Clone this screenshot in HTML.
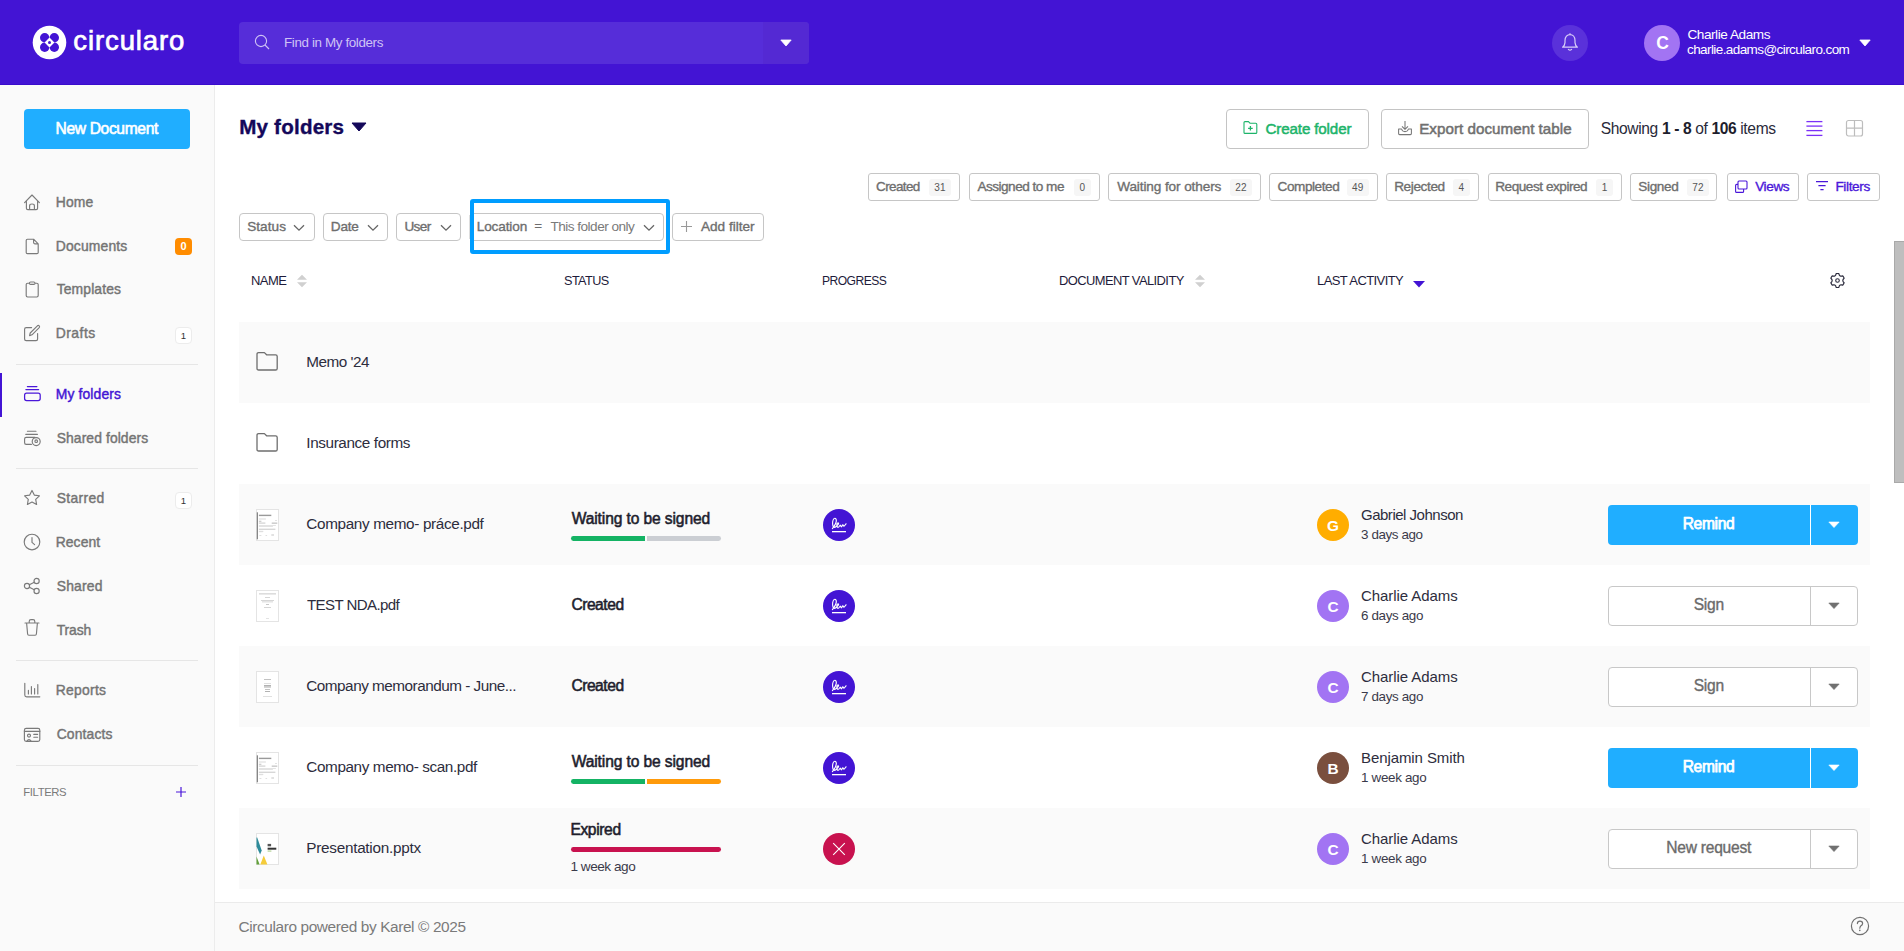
<!DOCTYPE html>
<html><head><meta charset="utf-8"><title>Circularo - My folders</title>
<style>
html,body{margin:0;padding:0;}
body{width:1904px;height:951px;position:relative;overflow:hidden;background:#fff;font-family:'Liberation Sans', sans-serif;}
.t{position:absolute;white-space:nowrap;line-height:1;font-family:'Liberation Sans', sans-serif;}
.t b{font-weight:700;color:#1e1e2d}
</style></head><body>
<div style="position:absolute;left:0px;top:0px;width:1904px;height:85px;background:#4314d4"></div>
<div style="position:absolute;left:0px;top:84px;width:1904px;height:1px;background:#3a0ccc"></div>
<svg style="position:absolute;left:32px;top:25px;" width="35" height="35" viewBox="0 0 35 35"><circle cx="17.5" cy="17.5" r="16.8" fill="#fff"/><g fill="#4314d4"><circle cx="12.7" cy="12.7" r="4.7"/><circle cx="22.3" cy="12.7" r="4.7"/><circle cx="12.7" cy="22.3" r="4.7"/><circle cx="22.3" cy="22.3" r="4.7"/></g><path d="M17.5 12.6 L22.4 17.5 L17.5 22.4 L12.6 17.5 Z" fill="#fff"/><circle cx="17.5" cy="17.5" r="1.5" fill="#4314d4"/></svg>
<div style="position:absolute;left:239px;top:22px;width:570px;height:42px;background:#562dd9;border-radius:4px"></div>
<div style="position:absolute;left:763px;top:22px;width:46px;height:42px;background:#5429d3;border-radius:0 4px 4px 0"></div>
<svg style="position:absolute;left:253px;top:33px;" width="18" height="18" viewBox="0 0 18 18"><circle cx="8" cy="8" r="5.6" fill="none" stroke="#cfc3f5" stroke-width="1.1"/><line x1="12" y1="12" x2="16" y2="16" stroke="#cfc3f5" stroke-width="1.1"/></svg>
<svg style="position:absolute;left:780px;top:38.5px;" width="12" height="8" viewBox="0 0 12 8"><path d="M0.8 1 L11.2 1 L6 7 Z" fill="#fff" stroke="#fff" stroke-width="0.8" stroke-linejoin="round"/></svg>
<div style="position:absolute;left:1552px;top:25px;width:36px;height:36px;background:#5a31da;border-radius:50%"></div>
<svg style="position:absolute;left:1561px;top:32px;" width="18" height="20" viewBox="0 0 18 20"><path d="M1.6 15.2 Q3.8 13.4 4 10.6 V8.4 C4 5 6.2 2.6 9 2.6 C11.8 2.6 14 5 14 8.4 V10.6 Q14.2 13.4 16.4 15.2 Z M9 1.2 V2.6" fill="none" stroke="#d8cdf8" stroke-width="1.2" stroke-linejoin="round"/><path d="M7.4 17.4 Q9 18.8 10.6 17.4" fill="none" stroke="#d8cdf8" stroke-width="1.2" stroke-linecap="round"/></svg>
<div style="position:absolute;left:1644px;top:25px;width:36px;height:36px;background:#a274f3;border-radius:50%"></div>
<div class="t" style="left:1644.5px;top:35px;width:36px;text-align:center;font-size:17.5px;font-weight:700;color:#fff">C</div>
<svg style="position:absolute;left:1859px;top:38.5px;" width="12" height="8" viewBox="0 0 12 8"><path d="M0.8 1 L11.2 1 L6 7 Z" fill="#fff" stroke="#fff" stroke-width="0.8" stroke-linejoin="round"/></svg>
<div style="position:absolute;left:0px;top:85px;width:214px;height:866px;background:#fafafa"></div>
<div style="position:absolute;left:214px;top:85px;width:1px;height:866px;background:#ececec"></div>
<div style="position:absolute;left:24px;top:109px;width:166px;height:40px;background:#20aeff;border-radius:4px"></div>
<div style="position:absolute;left:16px;top:364px;width:182px;height:1px;background:#e6e6e6"></div>
<div style="position:absolute;left:16px;top:468px;width:182px;height:1px;background:#e6e6e6"></div>
<div style="position:absolute;left:16px;top:660px;width:182px;height:1px;background:#e6e6e6"></div>
<div style="position:absolute;left:16px;top:765px;width:182px;height:1px;background:#e6e6e6"></div>
<div style="position:absolute;left:0px;top:373px;width:2px;height:44px;background:#4314d4"></div>
<div style="position:absolute;left:175px;top:238px;width:17px;height:17px;background:#ff8c00;border-radius:4px"></div>
<div class="t" style="left:175px;top:240.5px;width:17px;text-align:center;font-size:11px;font-weight:700;color:#fff">0</div>
<div style="position:absolute;left:175px;top:326.5px;width:15px;height:15px;background:#fff;border:1px solid #ececec;border-radius:4px"></div>
<div class="t" style="left:175px;top:330.5px;width:17px;text-align:center;font-size:9.6px;font-weight:400;color:#333">1</div>
<div style="position:absolute;left:175px;top:491.5px;width:15px;height:15px;background:#fff;border:1px solid #ececec;border-radius:4px"></div>
<div class="t" style="left:175px;top:495.5px;width:17px;text-align:center;font-size:9.6px;font-weight:400;color:#333">1</div>
<svg style="position:absolute;left:175px;top:786px;" width="12" height="12" viewBox="0 0 12 12"><path d="M6 1 V11 M1 6 H11" stroke="#4a17d9" stroke-width="1.2"/></svg>
<svg style="position:absolute;left:23px;top:193px;" width="19" height="19" viewBox="0 0 19 19"><path d="M1.6 9.6 L9 2 L16.4 9.6 M3.4 8 V15.2 Q3.4 16.6 4.8 16.6 H13.2 Q14.6 16.6 14.6 15.2 V8 M6.6 16.6 V12.8 Q6.6 11 9 11 Q11.4 11 11.4 12.8 V16.6" fill="none" stroke="#7a7a7a" stroke-width="1.15" stroke-linejoin="round" stroke-linecap="round"/></svg>
<svg style="position:absolute;left:25px;top:238px;" width="19" height="19" viewBox="0 0 19 19"><path d="M2.4 1.2 H8.6 L13.2 5.8 V14.4 Q13.2 15.6 12 15.6 H2.4 Q1.2 15.6 1.2 14.4 V2.4 Q1.2 1.2 2.4 1.2 Z M8.6 1.2 V4.6 Q8.6 5.8 9.8 5.8 H13.2" fill="none" stroke="#7a7a7a" stroke-width="1.15" stroke-linejoin="round" stroke-linecap="round"/></svg>
<svg style="position:absolute;left:25px;top:281px;" width="19" height="19" viewBox="0 0 19 19"><path d="M4.4 2.2 H2.6 Q1.2 2.2 1.2 3.6 V14.6 Q1.2 16 2.6 16 H11.8 Q13.2 16 13.2 14.6 V3.6 Q13.2 2.2 11.8 2.2 H10 M4.4 2.2 Q4.4 1 5.6 1 H8.8 Q10 1 10 2.2 Q10 3.4 8.8 3.4 H5.6 Q4.4 3.4 4.4 2.2" fill="none" stroke="#7a7a7a" stroke-width="1.15" stroke-linejoin="round" stroke-linecap="round"/></svg>
<svg style="position:absolute;left:23px;top:324px;" width="19" height="19" viewBox="0 0 19 19"><path d="M8.6 3.6 H3.2 Q1.6 3.6 1.6 5.2 V15 Q1.6 16.6 3.2 16.6 H13 Q14.6 16.6 14.6 15 V9.6 M6.6 11.6 L7.2 9 L14.4 1.8 Q15.4 1 16.2 1.8 Q17 2.6 16.2 3.6 L9 10.8 Z" fill="none" stroke="#7a7a7a" stroke-width="1.15" stroke-linejoin="round" stroke-linecap="round"/></svg>
<svg style="position:absolute;left:23px;top:429px;" width="19" height="19" viewBox="0 0 19 19"><path d="M4.4 2.2 H13 M2.8 5.4 H14.4 M12 8.4 H3.2 Q1.6 8.4 1.6 10 V13.8 Q1.6 15.4 3.2 15.4 H8.4" fill="none" stroke="#7a7a7a" stroke-width="1.15" stroke-linejoin="round" stroke-linecap="round"/><circle cx="13.2" cy="12.6" r="4" fill="none" stroke="#7a7a7a" stroke-width="1.15" stroke-linejoin="round" stroke-linecap="round"/><circle cx="13.2" cy="12.2" r="1.3" fill="none" stroke="#7a7a7a" stroke-width="1.15" stroke-linejoin="round" stroke-linecap="round"/></svg>
<svg style="position:absolute;left:23px;top:489px;" width="19" height="19" viewBox="0 0 19 19"><path d="M9 1.4 L11.3 6.1 L16.4 6.8 L12.7 10.4 L13.6 15.5 L9 13.1 L4.4 15.5 L5.3 10.4 L1.6 6.8 L6.7 6.1 Z" fill="none" stroke="#7a7a7a" stroke-width="1.15" stroke-linejoin="round" stroke-linecap="round"/></svg>
<svg style="position:absolute;left:23px;top:533px;" width="19" height="19" viewBox="0 0 19 19"><circle cx="9" cy="9" r="7.8" fill="none" stroke="#7a7a7a" stroke-width="1.15" stroke-linejoin="round" stroke-linecap="round"/><path d="M9 4.6 V9.4 L11.6 11.6" fill="none" stroke="#7a7a7a" stroke-width="1.15" stroke-linejoin="round" stroke-linecap="round"/></svg>
<svg style="position:absolute;left:23px;top:577px;" width="19" height="19" viewBox="0 0 19 19"><circle cx="4" cy="9" r="2.6" fill="none" stroke="#7a7a7a" stroke-width="1.15" stroke-linejoin="round" stroke-linecap="round"/><circle cx="13.6" cy="4" r="2.6" fill="none" stroke="#7a7a7a" stroke-width="1.15" stroke-linejoin="round" stroke-linecap="round"/><circle cx="13.6" cy="14" r="2.6" fill="none" stroke="#7a7a7a" stroke-width="1.15" stroke-linejoin="round" stroke-linecap="round"/><path d="M6.3 7.8 L11.3 5.2 M6.3 10.2 L11.3 12.8" fill="none" stroke="#7a7a7a" stroke-width="1.15" stroke-linejoin="round" stroke-linecap="round"/></svg>
<svg style="position:absolute;left:23px;top:618px;" width="19" height="19" viewBox="0 0 19 19"><path d="M2 5 H16 M6.2 5 V3.4 Q6.2 1.6 8 1.6 H10 Q11.8 1.6 11.8 3.4 V5 M3.6 5 L4.6 16 Q4.7 17.2 5.9 17.2 H12.1 Q13.3 17.2 13.4 16 L14.4 5" fill="none" stroke="#7a7a7a" stroke-width="1.15" stroke-linejoin="round" stroke-linecap="round"/></svg>
<svg style="position:absolute;left:23px;top:682px;" width="19" height="19" viewBox="0 0 19 19"><path d="M1.8 1.2 V13 Q1.8 14.8 3.6 14.8 H16.8 M5.4 8.4 V12 M8.4 4.6 V12 M11.6 6.6 V12 M14.8 2.6 V12" fill="none" stroke="#7a7a7a" stroke-width="1.15" stroke-linejoin="round" stroke-linecap="round"/></svg>
<svg style="position:absolute;left:23px;top:727px;" width="19" height="19" viewBox="0 0 19 19"><rect x="1.4" y="1.4" width="15.4" height="13" rx="1.8" fill="none" stroke="#7a7a7a" stroke-width="1.15" stroke-linejoin="round" stroke-linecap="round"/><path d="M1.4 4.4 H16.8 M10.8 7.4 H14.6 M10.8 10.2 H14.6 M3.8 14.4 Q6 10.8 8.2 14.4" fill="none" stroke="#7a7a7a" stroke-width="1.15" stroke-linejoin="round" stroke-linecap="round"/><circle cx="6" cy="8.6" r="1.5" fill="none" stroke="#7a7a7a" stroke-width="1.15" stroke-linejoin="round" stroke-linecap="round"/></svg>
<svg style="position:absolute;left:23px;top:384px;" width="19" height="19" viewBox="0 0 19 19"><path d="M4.4 2.5 H13.9 M2.9 5.6 H15.6" fill="none" stroke="#4a17d9" stroke-width="1.25" stroke-linecap="round"/><rect x="1.6" y="9.2" width="15.6" height="7.4" rx="2" fill="none" stroke="#4a17d9" stroke-width="1.25" stroke-linecap="round"/></svg>
<svg style="position:absolute;left:351px;top:122px;" width="16" height="10" viewBox="0 0 16 10"><path d="M1 1 H15 L8 9 Z" fill="#14085a" stroke="#14085a" stroke-linejoin="round" stroke-width="1"/></svg>
<div style="position:absolute;left:1226px;top:109px;width:141px;height:38px;border:1px solid #c4c4c4;border-radius:4px"></div>
<svg style="position:absolute;left:1242px;top:120px;" width="17" height="15" viewBox="0 0 17 15"><path d="M2 2.6 Q2 1.6 3 1.6 H6.4 L8 3.2 H13.8 Q14.8 3.2 14.8 4.2 V12.4 Q14.8 13.4 13.8 13.4 H3 Q2 13.4 2 12.4 Z" fill="none" stroke="#1db46a" stroke-width="1.1"/><path d="M8.4 6 V10.6 M6.1 8.3 H10.7" stroke="#1db46a" stroke-width="1.3"/></svg>
<div style="position:absolute;left:1381px;top:109px;width:206px;height:38px;border:1px solid #c4c4c4;border-radius:4px"></div>
<svg style="position:absolute;left:1397px;top:120px;" width="16" height="16" viewBox="0 0 16 16"><path d="M8 1 V9 M5 6.3 L8 9.3 L11 6.3 M1.6 9 V13.6 Q1.6 14.6 2.6 14.6 H13.4 Q14.4 14.6 14.4 13.6 V9 H11.4 Q10.8 11.6 8 11.6 Q5.2 11.6 4.6 9 Z" fill="none" stroke="#777" stroke-width="1.05" stroke-linejoin="round"/></svg>
<svg style="position:absolute;left:1805px;top:120px;" width="19" height="18" viewBox="0 0 19 18"><line x1="1.4" y1="1.6" x2="17.4" y2="1.6" stroke="#7b2ff7" stroke-width="1.3"/><line x1="1.4" y1="6.1" x2="17.4" y2="6.1" stroke="#7b2ff7" stroke-width="1.3"/><line x1="1.4" y1="10.6" x2="17.4" y2="10.6" stroke="#7b2ff7" stroke-width="1.3"/><line x1="1.4" y1="15.4" x2="17.4" y2="15.4" stroke="#7b2ff7" stroke-width="1.3"/></svg>
<svg style="position:absolute;left:1845px;top:119px;" width="19" height="19" viewBox="0 0 19 19"><rect x="1.5" y="1.5" width="16" height="15.5" rx="2" fill="none" stroke="#bdbdbd" stroke-width="1.2"/><path d="M9.5 1.5 V17 M1.5 9.2 H17.5" stroke="#bdbdbd" stroke-width="1.2"/></svg>
<div style="position:absolute;left:867.5px;top:173px;width:90.20000000000005px;height:26px;border:1px solid #c6c6c6;border-radius:3px"></div>
<div style="position:absolute;left:929px;top:179px;width:21.799999999999955px;height:17px;background:#f6f6f6;border-radius:3px"></div>
<div class="t" style="left:929px;top:182.5px;width:21.799999999999955px;text-align:center;font-size:10px;color:#555;font-weight:400;letter-spacing:0.2px">31</div>
<div style="position:absolute;left:968.6px;top:173px;width:129.10000000000002px;height:26px;border:1px solid #c6c6c6;border-radius:3px"></div>
<div style="position:absolute;left:1074px;top:179px;width:16.799999999999955px;height:17px;background:#f6f6f6;border-radius:3px"></div>
<div class="t" style="left:1074px;top:182.5px;width:16.799999999999955px;text-align:center;font-size:10px;color:#555;font-weight:400;letter-spacing:0.2px">0</div>
<div style="position:absolute;left:1108.4px;top:173px;width:150.29999999999995px;height:26px;border:1px solid #c6c6c6;border-radius:3px"></div>
<div style="position:absolute;left:1230.3px;top:179px;width:21.40000000000009px;height:17px;background:#f6f6f6;border-radius:3px"></div>
<div class="t" style="left:1230.3px;top:182.5px;width:21.40000000000009px;text-align:center;font-size:10px;color:#555;font-weight:400;letter-spacing:0.2px">22</div>
<div style="position:absolute;left:1269.3px;top:173px;width:106.40000000000009px;height:26px;border:1px solid #c6c6c6;border-radius:3px"></div>
<div style="position:absolute;left:1346.8px;top:179px;width:22.100000000000136px;height:17px;background:#f6f6f6;border-radius:3px"></div>
<div class="t" style="left:1346.8px;top:182.5px;width:22.100000000000136px;text-align:center;font-size:10px;color:#555;font-weight:400;letter-spacing:0.2px">49</div>
<div style="position:absolute;left:1386.1px;top:173px;width:90.5px;height:26px;border:1px solid #c6c6c6;border-radius:3px"></div>
<div style="position:absolute;left:1453px;top:179px;width:16.700000000000045px;height:17px;background:#f6f6f6;border-radius:3px"></div>
<div class="t" style="left:1453px;top:182.5px;width:16.700000000000045px;text-align:center;font-size:10px;color:#555;font-weight:400;letter-spacing:0.2px">4</div>
<div style="position:absolute;left:1487.5px;top:173px;width:132.20000000000005px;height:26px;border:1px solid #c6c6c6;border-radius:3px"></div>
<div style="position:absolute;left:1596.3px;top:179px;width:16.700000000000045px;height:17px;background:#f6f6f6;border-radius:3px"></div>
<div class="t" style="left:1596.3px;top:182.5px;width:16.700000000000045px;text-align:center;font-size:10px;color:#555;font-weight:400;letter-spacing:0.2px">1</div>
<div style="position:absolute;left:1630.3px;top:173px;width:85.20000000000005px;height:26px;border:1px solid #c6c6c6;border-radius:3px"></div>
<div style="position:absolute;left:1687.1px;top:179px;width:21.600000000000136px;height:17px;background:#f6f6f6;border-radius:3px"></div>
<div class="t" style="left:1687.1px;top:182.5px;width:21.600000000000136px;text-align:center;font-size:10px;color:#555;font-weight:400;letter-spacing:0.2px">72</div>
<div style="position:absolute;left:1726.6px;top:173px;width:70px;height:26px;border:1px solid #c6c6c6;border-radius:3px"></div>
<div style="position:absolute;left:1807.3px;top:173px;width:70.5px;height:26px;border:1px solid #c6c6c6;border-radius:3px"></div>
<svg style="position:absolute;left:1734px;top:179px;" width="15" height="15" viewBox="0 0 15 15"><path d="M5 2 H12 Q13 2 13 3 V9 Q13 10 12 10 H5 Q4 10 4 9 V3 Q4 2 5 2 Z" fill="none" stroke="#4a17d9" stroke-width="1.1"/><path d="M4 5.4 H2.6 Q1.6 5.4 1.6 6.4 V12.4 Q1.6 13.4 2.6 13.4 H8.6 Q9.6 13.4 9.6 12.4 V10" fill="none" stroke="#4a17d9" stroke-width="1.1"/></svg>
<svg style="position:absolute;left:1815px;top:179px;" width="14" height="15" viewBox="0 0 14 15"><path d="M1 2.6 H13 M3.4 6.6 H10.6 M5.4 10.6 H8.6" stroke="#4a17d9" stroke-width="1.1"/></svg>
<div style="position:absolute;left:239.4px;top:213px;width:73.29999999999998px;height:26px;border:1px solid #c6c6c6;border-radius:4px;background:#fff"></div>
<svg style="position:absolute;left:293.2px;top:223.5px;" width="12" height="8" viewBox="0 0 12 8"><path d="M1 1.2 L6 6.2 L11 1.2" fill="none" stroke="#666" stroke-width="1.3"/></svg>
<div style="position:absolute;left:323.2px;top:213px;width:62.60000000000002px;height:26px;border:1px solid #c6c6c6;border-radius:4px;background:#fff"></div>
<svg style="position:absolute;left:367.2px;top:223.5px;" width="12" height="8" viewBox="0 0 12 8"><path d="M1 1.2 L6 6.2 L11 1.2" fill="none" stroke="#666" stroke-width="1.3"/></svg>
<div style="position:absolute;left:396.3px;top:213px;width:62.30000000000001px;height:26px;border:1px solid #c6c6c6;border-radius:4px;background:#fff"></div>
<svg style="position:absolute;left:440.2px;top:223.5px;" width="12" height="8" viewBox="0 0 12 8"><path d="M1 1.2 L6 6.2 L11 1.2" fill="none" stroke="#666" stroke-width="1.3"/></svg>
<div style="position:absolute;left:469.6px;top:213px;width:192.0px;height:26px;border:1px solid #c6c6c6;border-radius:4px;background:#fff"></div>
<svg style="position:absolute;left:643.2px;top:223.5px;" width="12" height="8" viewBox="0 0 12 8"><path d="M1 1.2 L6 6.2 L11 1.2" fill="none" stroke="#666" stroke-width="1.3"/></svg>
<div style="position:absolute;left:672.1px;top:213px;width:89.7px;height:26px;border:1px solid #c6c6c6;border-radius:4px"></div>
<svg style="position:absolute;left:680px;top:220px;" width="13" height="13" viewBox="0 0 13 13"><path d="M6.5 1 V12 M1 6.5 H12" stroke="#999" stroke-width="1.1"/></svg>
<div style="position:absolute;left:469px;top:215px;width:1px;height:24px;background:#dedede"></div>
<div style="position:absolute;left:470.2px;top:199px;width:199.6px;height:54.5px;border:4px solid #009dff;border-radius:3px;box-sizing:border-box"></div>
<svg style="position:absolute;left:296px;top:274px;" width="12" height="15" viewBox="0 0 12 15"><path d="M6 0.8 L11 5.8 H1 Z M1 8.2 H11 L6 13.2 Z" fill="#d0d0d0"/></svg>
<svg style="position:absolute;left:1194px;top:274px;" width="12" height="15" viewBox="0 0 12 15"><path d="M6 0.8 L11 5.8 H1 Z M1 8.2 H11 L6 13.2 Z" fill="#d0d0d0"/></svg>
<svg style="position:absolute;left:1412px;top:280px;" width="14" height="9" viewBox="0 0 14 9"><path d="M1 1 H13 L7 7.4 Z" fill="#4314d4"/></svg>
<svg style="position:absolute;left:1828px;top:271px;" width="19" height="19" viewBox="0 0 19 19"><path d="M8.16 2.63 A7.0 7.0 0 0 1 10.84 2.63 Q11.50 6.04 14.78 4.91 A7.0 7.0 0 0 1 16.12 7.22 Q13.50 9.50 16.12 11.78 A7.0 7.0 0 0 1 14.78 14.09 Q11.50 12.96 10.84 16.37 A7.0 7.0 0 0 1 8.16 16.37 Q7.50 12.96 4.22 14.09 A7.0 7.0 0 0 1 2.88 11.78 Q5.50 9.50 2.88 7.22 A7.0 7.0 0 0 1 4.22 4.91 Q7.50 6.04 8.16 2.63 Z" fill="none" stroke="#2a2a3c" stroke-width="1.15" stroke-linejoin="round"/><circle cx="9.5" cy="9.5" r="1.8" fill="none" stroke="#2a2a3c" stroke-width="1.1"/></svg>
<div style="position:absolute;left:239px;top:322px;width:1631px;height:81px;background:#fafafa"></div>
<div style="position:absolute;left:239px;top:484px;width:1631px;height:81px;background:#fafafa"></div>
<div style="position:absolute;left:239px;top:646px;width:1631px;height:81px;background:#fafafa"></div>
<div style="position:absolute;left:239px;top:808px;width:1631px;height:81px;background:#fafafa"></div>
<svg style="position:absolute;left:255px;top:351px;" width="25" height="21" viewBox="0 0 25 21"><path d="M2 3.2 Q2 1.6 3.6 1.6 H9.4 L11.6 3.8 H20.6 Q22.2 3.8 22.2 5.4 V17.4 Q22.2 19 20.6 19 H3.6 Q2 19 2 17.4 Z" fill="none" stroke="#6e6e6e" stroke-width="1.3" stroke-linejoin="round"/></svg>
<svg style="position:absolute;left:255px;top:432px;" width="25" height="21" viewBox="0 0 25 21"><path d="M2 3.2 Q2 1.6 3.6 1.6 H9.4 L11.6 3.8 H20.6 Q22.2 3.8 22.2 5.4 V17.4 Q22.2 19 20.6 19 H3.6 Q2 19 2 17.4 Z" fill="none" stroke="#6e6e6e" stroke-width="1.3" stroke-linejoin="round"/></svg>
<svg style="position:absolute;left:255.5px;top:508.5px;" width="23" height="32" viewBox="0 0 23 32"><rect x="0.5" y="0.5" width="22" height="31" fill="#fff" stroke="#e4e4e4"/><rect x="0.8" y="3.3" width="1.1" height="27" fill="#7a7a7a"/><rect x="2.9" y="5.7" width="12.4" height="1.4" fill="#9a9a9a"/><rect x="2.9" y="9.2" width="7" height="0.6" fill="#e0e0e0"/><rect x="2.9" y="10.4" width="7" height="0.6" fill="#e0e0e0"/><rect x="2.9" y="11.8" width="2.5" height="0.8" fill="#b0b0b0"/><rect x="19" y="11.3" width="2" height="0.6" fill="#d0d0d0"/><rect x="2.9" y="13.7" width="6.5" height="0.7" fill="#b0b0b0"/><rect x="15.7" y="13.7" width="5.6" height="0.8" fill="#a0a0a0"/><rect x="2.9" y="16.2" width="17" height="0.6" fill="#d0d0d0"/><rect x="2.9" y="17.2" width="14" height="0.6" fill="#d0d0d0"/><rect x="2.9" y="19.8" width="16.5" height="0.7" fill="#b0b0b0"/><rect x="2.9" y="21.9" width="4.4" height="0.6" fill="#c0c0c0"/><rect x="2.9" y="22.7" width="4" height="0.5" fill="#e0e0e0"/><rect x="3.4" y="26.4" width="2" height="0.5" fill="#c0c0c0"/><rect x="9.5" y="26.4" width="1.6" height="0.5" fill="#c0c0c0"/><rect x="15.3" y="25.7" width="2.7" height="0.6" fill="#a0a0a0"/></svg>
<svg style="position:absolute;left:255.5px;top:589.5px;" width="23" height="32" viewBox="0 0 23 32"><rect x="0.5" y="0.5" width="22" height="31" fill="#fff" stroke="#e4e4e4"/><rect x="3" y="3" width="17" height="1.6" fill="#ddd"/><rect x="9" y="7" width="5" height="0.8" fill="#ccc"/><rect x="5" y="10" width="13" height="0.8" fill="#ccc"/><rect x="6" y="11.5" width="11" height="0.8" fill="#ccc"/><rect x="10" y="14" width="3" height="0.8" fill="#bbb"/><rect x="8" y="17" width="7" height="0.8" fill="#ccc"/><rect x="10" y="28" width="3" height="0.8" fill="#ddd"/></svg>
<svg style="position:absolute;left:255.5px;top:670.5px;" width="23" height="32" viewBox="0 0 23 32"><rect x="0.5" y="0.5" width="22" height="31" fill="#fff" stroke="#e4e4e4"/><rect x="8" y="8" width="7" height="0.9" fill="#bbb"/><rect x="8" y="12" width="7" height="0.9" fill="#ddd"/><rect x="8" y="14" width="7" height="0.9" fill="#aaa"/><rect x="8" y="15.5" width="7" height="0.9" fill="#999"/><rect x="9" y="18" width="5" height="0.9" fill="#bbb"/><rect x="9" y="20" width="5" height="0.9" fill="#aaa"/><rect x="7" y="25" width="9" height="0.9" fill="#ddd"/></svg>
<svg style="position:absolute;left:255.5px;top:751.5px;" width="23" height="32" viewBox="0 0 23 32"><rect x="0.5" y="0.5" width="22" height="31" fill="#fff" stroke="#e4e4e4"/><rect x="0.8" y="3.3" width="1.1" height="27" fill="#7a7a7a"/><rect x="2.9" y="5.7" width="12.4" height="1.4" fill="#9a9a9a"/><rect x="2.9" y="9.2" width="7" height="0.6" fill="#e0e0e0"/><rect x="2.9" y="10.4" width="7" height="0.6" fill="#e0e0e0"/><rect x="2.9" y="11.8" width="2.5" height="0.8" fill="#b0b0b0"/><rect x="19" y="11.3" width="2" height="0.6" fill="#d0d0d0"/><rect x="2.9" y="13.7" width="6.5" height="0.7" fill="#b0b0b0"/><rect x="15.7" y="13.7" width="5.6" height="0.8" fill="#a0a0a0"/><rect x="2.9" y="16.2" width="17" height="0.6" fill="#d0d0d0"/><rect x="2.9" y="17.2" width="14" height="0.6" fill="#d0d0d0"/><rect x="2.9" y="19.8" width="16.5" height="0.7" fill="#b0b0b0"/><rect x="2.9" y="21.9" width="4.4" height="0.6" fill="#c0c0c0"/><rect x="2.9" y="22.7" width="4" height="0.5" fill="#e0e0e0"/><rect x="3.4" y="26.4" width="2" height="0.5" fill="#c0c0c0"/><rect x="9.5" y="26.4" width="1.6" height="0.5" fill="#c0c0c0"/><rect x="15.3" y="25.7" width="2.7" height="0.6" fill="#a0a0a0"/></svg>
<svg style="position:absolute;left:255.5px;top:832.5px;" width="23" height="32" viewBox="0 0 23 32"><rect x="0.5" y="0.5" width="22" height="31" fill="#fff" stroke="#e4e4e4"/><path d="M0.5 4.5 L1.2 4.5 L5.7 17.5 L4.1 21.5 L0.5 13.5 Z" fill="#2e8b9a"/><path d="M0.5 23.4 L3.6 31.5 L0.5 31.5 Z" fill="#62a03a"/><path d="M7.8 22.4 L11.4 31.5 L4.3 31.5 Z" fill="#f5cc3a"/><rect x="11.6" y="10.9" width="3.5" height="2.4" fill="#555"/><rect x="11.6" y="14.7" width="8.7" height="2" fill="#333"/><rect x="11.6" y="17.7" width="3.8" height="0.7" fill="#7ab04a"/></svg>
<div style="position:absolute;left:571px;top:536px;width:74px;height:4.8px;background:#14b364;border-radius:2.4px 0 0 2.4px"></div><div style="position:absolute;left:647px;top:536px;width:74px;height:4.8px;background:#cbced3;border-radius:0 2.4px 2.4px 0"></div>
<div style="position:absolute;left:571px;top:779px;width:74px;height:4.8px;background:#14b364;border-radius:2.4px 0 0 2.4px"></div><div style="position:absolute;left:647px;top:779px;width:74px;height:4.8px;background:#ff9a0a;border-radius:0 2.4px 2.4px 0"></div>
<div style="position:absolute;left:571px;top:847.2px;width:150px;height:4.8px;background:#c8124f;border-radius:2.4px"></div>
<svg style="position:absolute;left:823px;top:509px;" width="32" height="32" viewBox="0 0 32 32"><circle cx="16" cy="16" r="16" fill="#4314d4"/><path d="M9.4 19.6 C11.5 17 13.6 14 13.3 11 C13.1 9.4 12 8.8 11 9.6 C9.6 10.8 9.2 14.4 10 17 C10.4 18.4 11.6 18.8 12.8 17.8 C14 16.8 15.8 15.4 15.6 14.4 C15.4 13.6 14.2 13.8 13.9 15.2 C13.6 16.8 14.2 18.6 15.4 18.2 C16.2 17.9 16.6 16.6 17.2 16.2 C17.6 16 17.8 17.8 18.4 17.8 C19 17.8 19.2 15.8 19.8 15.8 C20.4 15.8 20.4 17.4 21 17.2 C21.6 17 22.4 15.6 23 14.8" fill="none" stroke="#fff" stroke-width="1.15" stroke-linecap="round" stroke-linejoin="round"/><rect x="9" y="22" width="14" height="1.3" fill="#fff"/></svg>
<svg style="position:absolute;left:823px;top:590px;" width="32" height="32" viewBox="0 0 32 32"><circle cx="16" cy="16" r="16" fill="#4314d4"/><path d="M9.4 19.6 C11.5 17 13.6 14 13.3 11 C13.1 9.4 12 8.8 11 9.6 C9.6 10.8 9.2 14.4 10 17 C10.4 18.4 11.6 18.8 12.8 17.8 C14 16.8 15.8 15.4 15.6 14.4 C15.4 13.6 14.2 13.8 13.9 15.2 C13.6 16.8 14.2 18.6 15.4 18.2 C16.2 17.9 16.6 16.6 17.2 16.2 C17.6 16 17.8 17.8 18.4 17.8 C19 17.8 19.2 15.8 19.8 15.8 C20.4 15.8 20.4 17.4 21 17.2 C21.6 17 22.4 15.6 23 14.8" fill="none" stroke="#fff" stroke-width="1.15" stroke-linecap="round" stroke-linejoin="round"/><rect x="9" y="22" width="14" height="1.3" fill="#fff"/></svg>
<svg style="position:absolute;left:823px;top:671px;" width="32" height="32" viewBox="0 0 32 32"><circle cx="16" cy="16" r="16" fill="#4314d4"/><path d="M9.4 19.6 C11.5 17 13.6 14 13.3 11 C13.1 9.4 12 8.8 11 9.6 C9.6 10.8 9.2 14.4 10 17 C10.4 18.4 11.6 18.8 12.8 17.8 C14 16.8 15.8 15.4 15.6 14.4 C15.4 13.6 14.2 13.8 13.9 15.2 C13.6 16.8 14.2 18.6 15.4 18.2 C16.2 17.9 16.6 16.6 17.2 16.2 C17.6 16 17.8 17.8 18.4 17.8 C19 17.8 19.2 15.8 19.8 15.8 C20.4 15.8 20.4 17.4 21 17.2 C21.6 17 22.4 15.6 23 14.8" fill="none" stroke="#fff" stroke-width="1.15" stroke-linecap="round" stroke-linejoin="round"/><rect x="9" y="22" width="14" height="1.3" fill="#fff"/></svg>
<svg style="position:absolute;left:823px;top:752px;" width="32" height="32" viewBox="0 0 32 32"><circle cx="16" cy="16" r="16" fill="#4314d4"/><path d="M9.4 19.6 C11.5 17 13.6 14 13.3 11 C13.1 9.4 12 8.8 11 9.6 C9.6 10.8 9.2 14.4 10 17 C10.4 18.4 11.6 18.8 12.8 17.8 C14 16.8 15.8 15.4 15.6 14.4 C15.4 13.6 14.2 13.8 13.9 15.2 C13.6 16.8 14.2 18.6 15.4 18.2 C16.2 17.9 16.6 16.6 17.2 16.2 C17.6 16 17.8 17.8 18.4 17.8 C19 17.8 19.2 15.8 19.8 15.8 C20.4 15.8 20.4 17.4 21 17.2 C21.6 17 22.4 15.6 23 14.8" fill="none" stroke="#fff" stroke-width="1.15" stroke-linecap="round" stroke-linejoin="round"/><rect x="9" y="22" width="14" height="1.3" fill="#fff"/></svg>
<svg style="position:absolute;left:823px;top:833px;" width="32" height="32" viewBox="0 0 32 32"><circle cx="16" cy="16" r="16" fill="#c8124f"/><path d="M10.2 10.2 L21.8 21.8 M21.8 10.2 L10.2 21.8" stroke="#fff" stroke-width="1.1"/></svg>
<div style="position:absolute;left:1317px;top:509px;width:32px;height:32px;background:#ffad00;border-radius:50%"></div>
<div class="t" style="left:1317px;top:517.6px;width:32px;text-align:center;font-size:15.4px;font-weight:700;color:#fff">G</div>
<div style="position:absolute;left:1317px;top:590px;width:32px;height:32px;background:#a274f3;border-radius:50%"></div>
<div class="t" style="left:1317px;top:598.6px;width:32px;text-align:center;font-size:15.4px;font-weight:700;color:#fff">C</div>
<div style="position:absolute;left:1317px;top:671px;width:32px;height:32px;background:#a274f3;border-radius:50%"></div>
<div class="t" style="left:1317px;top:679.6px;width:32px;text-align:center;font-size:15.4px;font-weight:700;color:#fff">C</div>
<div style="position:absolute;left:1317px;top:752px;width:32px;height:32px;background:#7a4f3e;border-radius:50%"></div>
<div class="t" style="left:1317px;top:760.6px;width:32px;text-align:center;font-size:15.4px;font-weight:700;color:#fff">B</div>
<div style="position:absolute;left:1317px;top:833px;width:32px;height:32px;background:#a274f3;border-radius:50%"></div>
<div class="t" style="left:1317px;top:841.6px;width:32px;text-align:center;font-size:15.4px;font-weight:700;color:#fff">C</div>
<div style="position:absolute;left:1608px;top:505px;width:250px;height:40px;background:#20aeff;border-radius:4px"></div>
<div style="position:absolute;left:1810px;top:505px;width:1px;height:40px;background:#fff"></div>
<svg style="position:absolute;left:1828px;top:521px;" width="12" height="8" viewBox="0 0 12 8"><path d="M0.8 1 H11.2 L6 6.6 Z" fill="#fff" stroke="#fff" stroke-width="0.6" stroke-linejoin="round"/></svg>
<div style="position:absolute;left:1608px;top:586px;width:248px;height:38px;background:#fff;border:1px solid #c8c8c8;border-radius:4px"></div>
<div style="position:absolute;left:1810px;top:586px;width:1px;height:40px;background:#c8c8c8"></div>
<svg style="position:absolute;left:1828px;top:602px;" width="12" height="8" viewBox="0 0 12 8"><path d="M0.8 1 H11.2 L6 6.6 Z" fill="#707070" stroke="#707070" stroke-width="0.6" stroke-linejoin="round"/></svg>
<div style="position:absolute;left:1608px;top:667px;width:248px;height:38px;background:#fff;border:1px solid #c8c8c8;border-radius:4px"></div>
<div style="position:absolute;left:1810px;top:667px;width:1px;height:40px;background:#c8c8c8"></div>
<svg style="position:absolute;left:1828px;top:683px;" width="12" height="8" viewBox="0 0 12 8"><path d="M0.8 1 H11.2 L6 6.6 Z" fill="#707070" stroke="#707070" stroke-width="0.6" stroke-linejoin="round"/></svg>
<div style="position:absolute;left:1608px;top:748px;width:250px;height:40px;background:#20aeff;border-radius:4px"></div>
<div style="position:absolute;left:1810px;top:748px;width:1px;height:40px;background:#fff"></div>
<svg style="position:absolute;left:1828px;top:764px;" width="12" height="8" viewBox="0 0 12 8"><path d="M0.8 1 H11.2 L6 6.6 Z" fill="#fff" stroke="#fff" stroke-width="0.6" stroke-linejoin="round"/></svg>
<div style="position:absolute;left:1608px;top:829px;width:248px;height:38px;background:#fff;border:1px solid #c8c8c8;border-radius:4px"></div>
<div style="position:absolute;left:1810px;top:829px;width:1px;height:40px;background:#c8c8c8"></div>
<svg style="position:absolute;left:1828px;top:845px;" width="12" height="8" viewBox="0 0 12 8"><path d="M0.8 1 H11.2 L6 6.6 Z" fill="#707070" stroke="#707070" stroke-width="0.6" stroke-linejoin="round"/></svg>
<div style="position:absolute;left:215px;top:902px;width:1689px;height:49px;background:#fafafa"></div>
<div style="position:absolute;left:215px;top:902px;width:1689px;height:1px;background:#ebebeb"></div>
<svg style="position:absolute;left:1850px;top:916px;" width="20" height="20" viewBox="0 0 20 20"><circle cx="10" cy="10" r="8.6" fill="none" stroke="#707070" stroke-width="1.2"/><path d="M7.4 7.6 Q7.4 5.2 10 5.2 Q12.6 5.2 12.6 7.4 Q12.6 9 10.8 9.9 Q10 10.4 9.8 12.2" fill="none" stroke="#707070" stroke-width="1.2" stroke-linecap="round"/><circle cx="9.8" cy="14.4" r="0.8" fill="#707070"/></svg>
<div style="position:absolute;left:1894px;top:241px;width:10px;height:242px;background:#bebebe;border-left:1px solid #a9a9a9;border-top:1px solid #a9a9a9;border-bottom:1px solid #a9a9a9;box-sizing:border-box"></div>
<div class="t" style="left:73.30px;top:27.00px;font-size:27.5px;font-weight:400;color:#ffffff;letter-spacing:0.900px;-webkit-text-stroke:0.7px #fff">circularo</div>
<div class="t" style="left:284.00px;top:36.00px;font-size:13.4px;font-weight:400;color:#cfc3f5;letter-spacing:-0.371px;">Find in My folders</div>
<div class="t" style="left:1687.40px;top:28.00px;font-size:13.6px;font-weight:400;color:#ffffff;letter-spacing:-0.442px;">Charlie Adams</div>
<div class="t" style="left:1687.40px;top:43.00px;font-size:13.6px;font-weight:400;color:#ffffff;letter-spacing:-0.600px;transform:scaleX(0.9951);transform-origin:0 0;">charlie.adams@circularo.com</div>
<div class="t" style="left:55.60px;top:121.00px;font-size:15.6px;font-weight:400;-webkit-text-stroke:0.6px #ffffff;color:#ffffff;letter-spacing:-0.355px;">New Document</div>
<div class="t" style="left:55.70px;top:196.00px;font-size:13.9px;font-weight:400;-webkit-text-stroke:0.42px #747474;color:#747474;letter-spacing:0.167px;">Home</div>
<div class="t" style="left:55.70px;top:240.00px;font-size:13.9px;font-weight:400;-webkit-text-stroke:0.42px #747474;color:#747474;letter-spacing:0.162px;">Documents</div>
<div class="t" style="left:56.70px;top:283.00px;font-size:13.9px;font-weight:400;-webkit-text-stroke:0.42px #747474;color:#747474;letter-spacing:0.125px;">Templates</div>
<div class="t" style="left:55.70px;top:327.00px;font-size:13.9px;font-weight:400;-webkit-text-stroke:0.42px #747474;color:#747474;letter-spacing:0.500px;">Drafts</div>
<div class="t" style="left:55.70px;top:388.00px;font-size:13.9px;font-weight:400;-webkit-text-stroke:0.42px #4314d4;color:#4314d4;letter-spacing:0.144px;">My folders</div>
<div class="t" style="left:56.70px;top:432.00px;font-size:13.9px;font-weight:400;-webkit-text-stroke:0.42px #747474;color:#747474;letter-spacing:0.085px;">Shared folders</div>
<div class="t" style="left:56.70px;top:492.00px;font-size:13.9px;font-weight:400;-webkit-text-stroke:0.42px #747474;color:#747474;letter-spacing:0.333px;">Starred</div>
<div class="t" style="left:55.70px;top:536.00px;font-size:13.9px;font-weight:400;-webkit-text-stroke:0.42px #747474;color:#747474;letter-spacing:0.080px;">Recent</div>
<div class="t" style="left:56.70px;top:580.00px;font-size:13.9px;font-weight:400;-webkit-text-stroke:0.42px #747474;color:#747474;letter-spacing:0.200px;">Shared</div>
<div class="t" style="left:56.70px;top:624.00px;font-size:13.9px;font-weight:400;-webkit-text-stroke:0.42px #747474;color:#747474;letter-spacing:-0.100px;">Trash</div>
<div class="t" style="left:55.70px;top:684.00px;font-size:13.9px;font-weight:400;-webkit-text-stroke:0.42px #747474;color:#747474;letter-spacing:0.283px;">Reports</div>
<div class="t" style="left:56.70px;top:728.00px;font-size:13.9px;font-weight:400;-webkit-text-stroke:0.42px #747474;color:#747474;letter-spacing:0.143px;">Contacts</div>
<div class="t" style="left:23.30px;top:787.00px;font-size:11.3px;font-weight:400;color:#7a7a7a;letter-spacing:-0.383px;">FILTERS</div>
<div class="t" style="left:239.20px;top:117.00px;font-size:20.6px;font-weight:700;color:#14085a;letter-spacing:0.200px;-webkit-text-stroke:0.35px #14085a">My folders</div>
<div class="t" style="left:1265.50px;top:121.00px;font-size:15.2px;font-weight:400;-webkit-text-stroke:0.5px #1db46a;color:#1db46a;letter-spacing:-0.150px;">Create folder</div>
<div class="t" style="left:1419.20px;top:121.00px;font-size:15.2px;font-weight:400;-webkit-text-stroke:0.5px #707070;color:#707070;letter-spacing:0.025px;">Export document table</div>
<div class="t" style="left:1600.70px;top:121.00px;font-size:15.6px;font-weight:400;color:#2a2a3a;letter-spacing:-0.372px;">Showing <b>1 - 8</b> of <b>106</b> items</div>
<div class="t" style="left:876.10px;top:180.00px;font-size:13.6px;font-weight:400;-webkit-text-stroke:0.35px #6e6e6e;color:#6e6e6e;letter-spacing:-0.600px;transform:scaleX(0.991);transform-origin:0 0;">Created</div>
<div class="t" style="left:977.40px;top:180.00px;font-size:13.6px;font-weight:400;-webkit-text-stroke:0.35px #6e6e6e;color:#6e6e6e;letter-spacing:-0.508px;">Assigned to me</div>
<div class="t" style="left:1117.20px;top:180.00px;font-size:13.6px;font-weight:400;-webkit-text-stroke:0.35px #6e6e6e;color:#6e6e6e;letter-spacing:-0.106px;">Waiting for others</div>
<div class="t" style="left:1277.50px;top:180.00px;font-size:13.6px;font-weight:400;-webkit-text-stroke:0.35px #6e6e6e;color:#6e6e6e;letter-spacing:-0.438px;">Completed</div>
<div class="t" style="left:1394.20px;top:180.00px;font-size:13.6px;font-weight:400;-webkit-text-stroke:0.35px #6e6e6e;color:#6e6e6e;letter-spacing:-0.386px;">Rejected</div>
<div class="t" style="left:1495.20px;top:180.00px;font-size:13.6px;font-weight:400;-webkit-text-stroke:0.35px #6e6e6e;color:#6e6e6e;letter-spacing:-0.464px;">Request expired</div>
<div class="t" style="left:1638.30px;top:180.00px;font-size:13.6px;font-weight:400;-webkit-text-stroke:0.35px #6e6e6e;color:#6e6e6e;letter-spacing:-0.360px;">Signed</div>
<div class="t" style="left:1755.20px;top:180.00px;font-size:13.6px;font-weight:400;-webkit-text-stroke:0.35px #4a17d9;color:#4a17d9;letter-spacing:-0.400px;">Views</div>
<div class="t" style="left:1835.40px;top:180.00px;font-size:13.6px;font-weight:400;-webkit-text-stroke:0.35px #4a17d9;color:#4a17d9;letter-spacing:-0.367px;">Filters</div>
<div class="t" style="left:247.20px;top:220.00px;font-size:13.6px;font-weight:400;-webkit-text-stroke:0.35px #6e6e6e;color:#6e6e6e;letter-spacing:0.040px;">Status</div>
<div class="t" style="left:330.80px;top:220.00px;font-size:13.6px;font-weight:400;-webkit-text-stroke:0.35px #6e6e6e;color:#6e6e6e;letter-spacing:-0.200px;">Date</div>
<div class="t" style="left:404.40px;top:220.00px;font-size:13.6px;font-weight:400;-webkit-text-stroke:0.35px #6e6e6e;color:#6e6e6e;letter-spacing:-0.600px;">User</div>
<div class="t" style="left:476.70px;top:220.00px;font-size:13.6px;font-weight:400;-webkit-text-stroke:0.35px #6e6e6e;color:#6e6e6e;letter-spacing:-0.114px;">Location</div>
<div class="t" style="left:534.30px;top:219.00px;font-size:13.6px;font-weight:400;color:#6e6e6e;letter-spacing:0.500px;">=</div>
<div class="t" style="left:550.50px;top:220.00px;font-size:13.6px;font-weight:400;color:#7a7a7a;letter-spacing:-0.527px;">This folder only</div>
<div class="t" style="left:701.00px;top:220.00px;font-size:13.6px;font-weight:400;-webkit-text-stroke:0.35px #6e6e6e;color:#6e6e6e;letter-spacing:-0.022px;">Add filter</div>
<div class="t" style="left:250.63px;top:274.00px;font-size:13.4px;font-weight:400;color:#1e1b3a;letter-spacing:-0.600px;transform:scaleX(0.9716);transform-origin:0 0;">NAME</div>
<div class="t" style="left:564.25px;top:274.00px;font-size:13.4px;font-weight:400;color:#1e1b3a;letter-spacing:-0.600px;transform:scaleX(0.9468);transform-origin:0 0;">STATUS</div>
<div class="t" style="left:822.30px;top:274.00px;font-size:13.4px;font-weight:400;color:#1e1b3a;letter-spacing:-0.600px;transform:scaleX(0.904);transform-origin:0 0;">PROGRESS</div>
<div class="t" style="left:1058.83px;top:274.00px;font-size:13.4px;font-weight:400;color:#1e1b3a;letter-spacing:-0.600px;transform:scaleX(0.9657);transform-origin:0 0;">DOCUMENT VALIDITY</div>
<div class="t" style="left:1317.03px;top:274.00px;font-size:13.4px;font-weight:400;color:#1e1b3a;letter-spacing:-0.600px;transform:scaleX(0.9715);transform-origin:0 0;">LAST ACTIVITY</div>
<div class="t" style="left:306.30px;top:354.00px;font-size:15.3px;font-weight:400;color:#2d2d3d;letter-spacing:-0.500px;">Memo '24</div>
<div class="t" style="left:306.30px;top:435.00px;font-size:15.3px;font-weight:400;color:#2d2d3d;letter-spacing:-0.393px;">Insurance forms</div>
<div class="t" style="left:306.30px;top:516.00px;font-size:15.3px;font-weight:400;color:#2d2d3d;letter-spacing:-0.355px;">Company memo- práce.pdf</div>
<div class="t" style="left:307.30px;top:597.00px;font-size:15.3px;font-weight:400;color:#2d2d3d;letter-spacing:-0.600px;transform:scaleX(0.9841);transform-origin:0 0;">TEST NDA.pdf</div>
<div class="t" style="left:306.30px;top:678.00px;font-size:15.3px;font-weight:400;color:#2d2d3d;letter-spacing:-0.496px;">Company memorandum - June...</div>
<div class="t" style="left:306.30px;top:759.00px;font-size:15.3px;font-weight:400;color:#2d2d3d;letter-spacing:-0.400px;">Company memo- scan.pdf</div>
<div class="t" style="left:306.30px;top:840.00px;font-size:15.3px;font-weight:400;color:#2d2d3d;letter-spacing:-0.269px;">Presentation.pptx</div>
<div class="t" style="left:571.70px;top:511.00px;font-size:15.6px;font-weight:400;-webkit-text-stroke:0.55px #1e1e2d;color:#1e1e2d;letter-spacing:-0.116px;">Waiting to be signed</div>
<div class="t" style="left:571.40px;top:597.00px;font-size:15.6px;font-weight:400;-webkit-text-stroke:0.55px #1e1e2d;color:#1e1e2d;letter-spacing:-0.467px;">Created</div>
<div class="t" style="left:571.40px;top:678.00px;font-size:15.6px;font-weight:400;-webkit-text-stroke:0.55px #1e1e2d;color:#1e1e2d;letter-spacing:-0.467px;">Created</div>
<div class="t" style="left:571.70px;top:754.00px;font-size:15.6px;font-weight:400;-webkit-text-stroke:0.55px #1e1e2d;color:#1e1e2d;letter-spacing:-0.116px;">Waiting to be signed</div>
<div class="t" style="left:570.40px;top:822.00px;font-size:15.6px;font-weight:400;-webkit-text-stroke:0.55px #1e1e2d;color:#1e1e2d;letter-spacing:-0.367px;">Expired</div>
<div class="t" style="left:570.40px;top:860.00px;font-size:13.6px;font-weight:400;color:#3a3a4a;letter-spacing:-0.467px;">1 week ago</div>
<div class="t" style="left:1361.00px;top:507.00px;font-size:15.0px;font-weight:400;color:#2d2d3d;letter-spacing:-0.493px;">Gabriel Johnson</div>
<div class="t" style="left:1361.00px;top:528.00px;font-size:13.4px;font-weight:400;color:#3a3a4a;letter-spacing:-0.389px;">3 days ago</div>
<div class="t" style="left:1361.00px;top:588.00px;font-size:15.0px;font-weight:400;color:#2d2d3d;letter-spacing:-0.075px;">Charlie Adams</div>
<div class="t" style="left:1361.00px;top:609.00px;font-size:13.4px;font-weight:400;color:#3a3a4a;letter-spacing:-0.344px;">6 days ago</div>
<div class="t" style="left:1361.00px;top:669.00px;font-size:15.0px;font-weight:400;color:#2d2d3d;letter-spacing:-0.075px;">Charlie Adams</div>
<div class="t" style="left:1361.00px;top:690.00px;font-size:13.4px;font-weight:400;color:#3a3a4a;letter-spacing:-0.344px;">7 days ago</div>
<div class="t" style="left:1361.00px;top:750.00px;font-size:15.0px;font-weight:400;color:#2d2d3d;letter-spacing:-0.085px;">Benjamin Smith</div>
<div class="t" style="left:1361.00px;top:771.00px;font-size:13.4px;font-weight:400;color:#3a3a4a;letter-spacing:-0.311px;">1 week ago</div>
<div class="t" style="left:1361.00px;top:831.00px;font-size:15.0px;font-weight:400;color:#2d2d3d;letter-spacing:-0.075px;">Charlie Adams</div>
<div class="t" style="left:1361.00px;top:852.00px;font-size:13.4px;font-weight:400;color:#3a3a4a;letter-spacing:-0.311px;">1 week ago</div>
<div class="t" style="left:1682.70px;top:516.00px;font-size:15.6px;font-weight:400;-webkit-text-stroke:0.75px #ffffff;color:#ffffff;letter-spacing:-0.340px;">Remind</div>
<div class="t" style="left:1693.70px;top:597.00px;font-size:15.6px;font-weight:400;-webkit-text-stroke:0.35px #6b6b6b;color:#6b6b6b;letter-spacing:-0.233px;">Sign</div>
<div class="t" style="left:1693.70px;top:678.00px;font-size:15.6px;font-weight:400;-webkit-text-stroke:0.35px #6b6b6b;color:#6b6b6b;letter-spacing:-0.233px;">Sign</div>
<div class="t" style="left:1682.70px;top:759.00px;font-size:15.6px;font-weight:400;-webkit-text-stroke:0.75px #ffffff;color:#ffffff;letter-spacing:-0.340px;">Remind</div>
<div class="t" style="left:1666.30px;top:840.00px;font-size:15.6px;font-weight:400;-webkit-text-stroke:0.35px #6b6b6b;color:#6b6b6b;letter-spacing:-0.250px;">New request</div>
<div class="t" style="left:238.50px;top:919.00px;font-size:15.4px;font-weight:400;color:#7a7a7a;letter-spacing:-0.384px;">Circularo powered by Karel © 2025</div>
</body></html>
